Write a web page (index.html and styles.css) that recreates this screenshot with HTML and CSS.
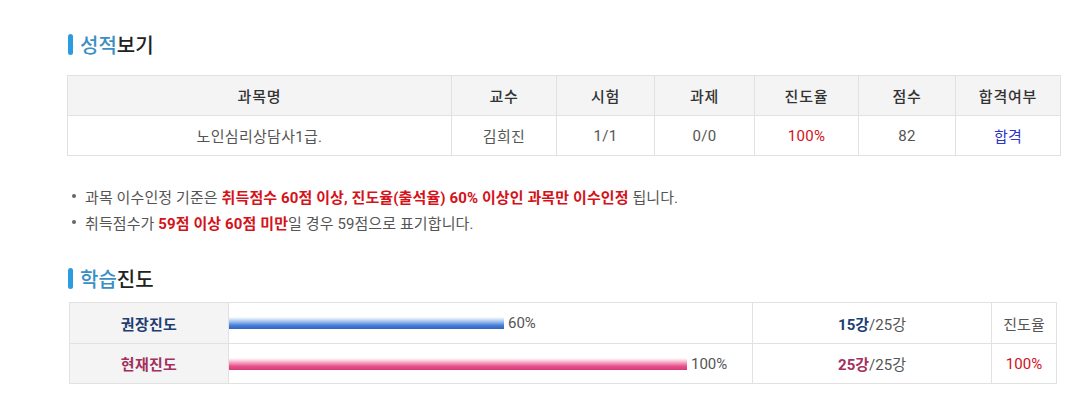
FILE: index.html
```html
<!DOCTYPE html>
<html lang="ko">
<head>
<meta charset="utf-8">
<link rel="stylesheet" href="styles.css">
</head>
<body>
<div class="page">
  <h2 class="sec-title"><span class="sec-bar"></span><span class="hl">성적</span>보기</h2>
  <table class="grade">
    <colgroup>
      <col style="width:384px"><col style="width:105px"><col style="width:98px"><col style="width:100px"><col style="width:104px"><col style="width:97px"><col>
    </colgroup>
    <thead>
      <tr><th>과목명</th><th>교수</th><th>시험</th><th>과제</th><th>진도율</th><th>점수</th><th>합격여부</th></tr>
    </thead>
    <tbody>
      <tr><td>노인심리상담사1급.</td><td>김희진</td><td>1/1</td><td>0/0</td><td class="red">100%</td><td>82</td><td class="pass">합격</td></tr>
    </tbody>
  </table>
  <ul class="notes">
    <li><span class="dot"></span>과목 이수인정 기준은 <b>취득점수 60점 이상, 진도율(출석율) 60% 이상인 과목만 이수인정</b> 됩니다.</li>
    <li><span class="dot"></span>취득점수가 <b>59점 이상 60점 미만</b>일 경우 59점으로 표기합니다.</li>
  </ul>
  <h2 class="sec-title second"><span class="sec-bar"></span><span class="hl">학습</span>진도</h2>
  <table class="progress">
    <colgroup>
      <col style="width:159px"><col style="width:524px"><col style="width:239px"><col>
    </colgroup>
    <tbody>
      <tr class="rec">
        <th>권장진도</th>
        <td class="barcell"><div class="barwrap"><span class="track"><span class="bar blue" style="width:60%"></span></span><span class="pct">60%</span></div></td>
        <td class="count"><b>15강</b>/25강</td>
        <td class="rate">진도율</td>
      </tr>
      <tr class="cur">
        <th>현재진도</th>
        <td class="barcell"><div class="barwrap"><span class="track"><span class="bar pink" style="width:100%"></span></span><span class="pct">100%</span></div></td>
        <td class="count"><b>25강</b>/25강</td>
        <td class="rate red">100%</td>
      </tr>
    </tbody>
  </table>
</div>
</body>
</html>
```

FILE: styles.css
```css
* { box-sizing: border-box; }
html, body { margin: 0; padding: 0; background: #fff; }
body {
  font-family: Roboto, "Noto Sans CJK KR", sans-serif;
  color: #555;
  font-size: 15px;
}
.page {
  padding: 32px 0 0 67px;
  width: 1061px;
}
.sec-title {
  display: flex;
  align-items: center;
  height: 24px;
  margin: 0;
  font-size: 20px;
  font-weight: 500;
  color: #222;
  letter-spacing: 0;
}
.sec-bar {
  width: 5px;
  height: 21px;
  border-radius: 3px;
  background: #2b9be2;
  margin: 0 7px 0 1px;
}
.hl { color: #3b8fc4; }
.sec-title.second { margin-top: 31px; }

table { border-collapse: collapse; table-layout: fixed; }
.grade {
  width: 994px;
  margin-top: 19px;
}
.grade th, .grade td {
  border: 1px solid #e1e1e1;
  text-align: center;
  height: 40px;
  padding: 0;
  font-size: 15px;
  letter-spacing: 0.3px;
}
.grade th {
  background: #f4f4f4;
  color: #333;
  font-weight: 500;
  letter-spacing: 0.8px;
}
.grade td { color: #555; }
.red { color: #d0121b !important; }
.pass { color: #2e35c9 !important; }

.notes {
  list-style: none;
  margin: 27px 0 0 0;
  padding: 0;
}
.notes li {
  display: flex;
  align-items: center;
  height: 26px;
  font-size: 15px;
  letter-spacing: 0.1px;
  color: #555;
  white-space: pre;
}
.notes b { color: #d4121a; font-weight: 700; }
.dot {
  width: 4px;
  height: 4px;
  border-radius: 50%;
  background: #666;
  margin: 0 9px 0 5px;
}

.progress {
  width: 988px;
  margin: 12px 0 0 2px;
}
.progress th, .progress td {
  border: 1px solid #e1e1e1;
  height: 41px;
  padding: 0;
  text-align: center;
  font-size: 15px;
}
.progress tr.cur th, .progress tr.cur td { height: 40px; }
.progress th {
  background: #f4f4f4;
  font-weight: 700;
  letter-spacing: 0.3px;
}
.rec th { color: #1d3f72; }
.cur th { color: #a3305d; }
.barcell { text-align: left !important; }
.barwrap {
  display: flex;
  align-items: center;
}
.track {
  display: block;
  width: 458px;
  flex: none;
}
.bar {
  display: block;
  height: 12px;
}
.rec .track { width: 275px; }
.rec .bar { width: 100% !important; }
.bar.blue {
  background: linear-gradient(to bottom, #ffffff 0%, #cfe0f7 20%, #8db4ea 45%, #4a7fd8 70%, #2f62c6 100%);
}
.bar.pink {
  background: linear-gradient(to bottom, #ffffff 0%, #fbd3e1 20%, #f38fb4 45%, #e5508a 70%, #d63a78 100%);
}
.pct {
  margin-left: 4px;
  color: #555;
}
.count { color: #555; }
.rec .count b { color: #1d3f72; }
.cur .count b { color: #a3305d; }
.rate { color: #555; }
```
